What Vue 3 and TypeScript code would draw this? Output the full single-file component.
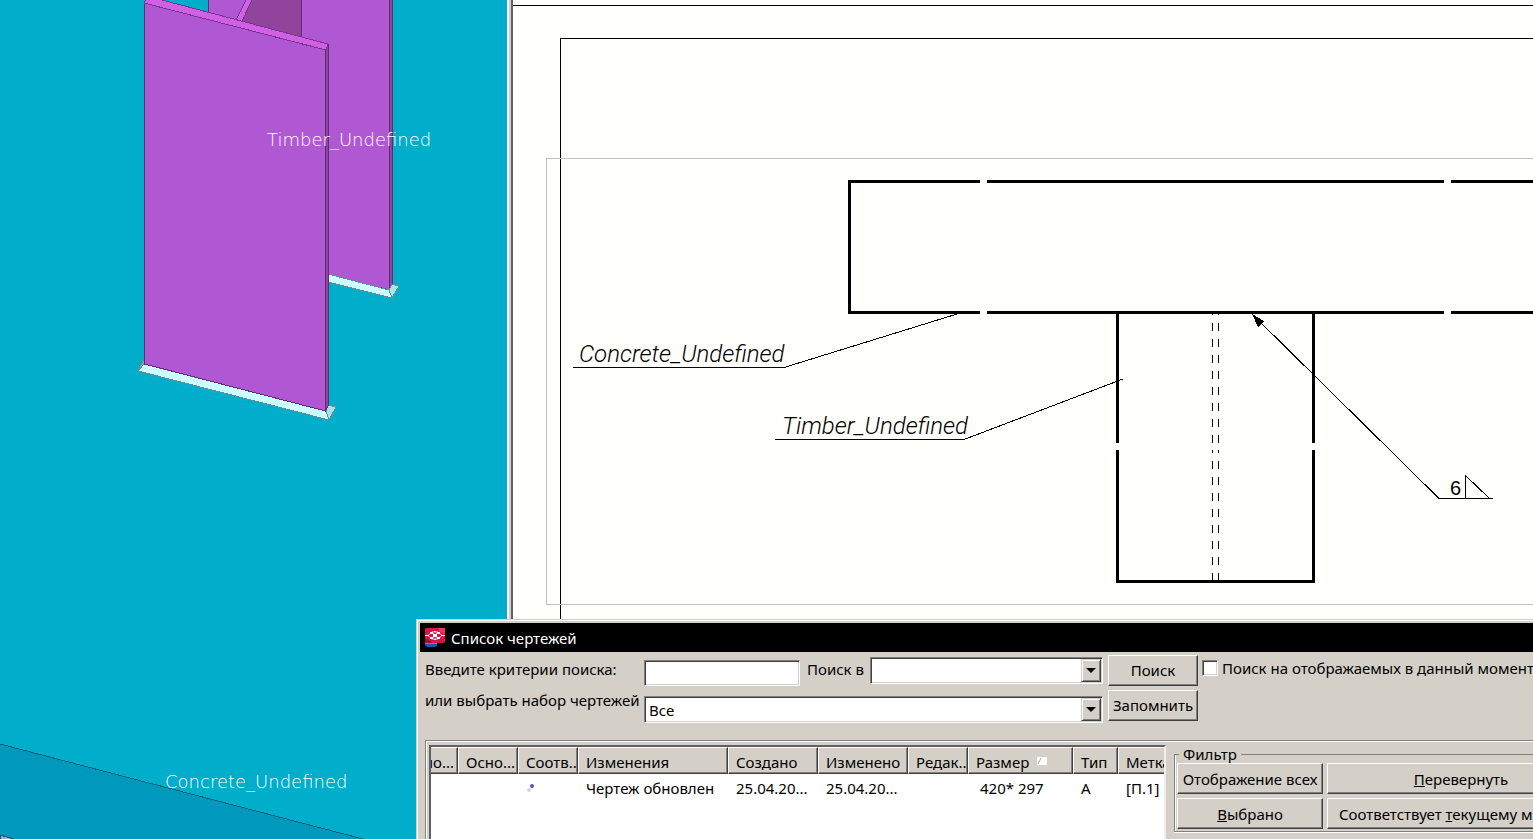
<script setup lang="ts">
import { ref } from 'vue'

interface Column {
  key: string
  title: string
  width: number
}

const columns: Column[] = [
  { key: 'number', title: 'мо...', width: 27 },
  { key: 'main', title: 'Осно...', width: 60 },
  { key: 'match', title: 'Соотв...', width: 60 },
  { key: 'changes', title: 'Изменения', width: 150 },
  { key: 'created', title: 'Создано', width: 90 },
  { key: 'modified', title: 'Изменено', width: 90 },
  { key: 'revision', title: 'Редак...', width: 60 },
  { key: 'size', title: 'Размер', width: 105 },
  { key: 'type', title: 'Тип', width: 45 },
  { key: 'mark', title: 'Метка', width: 90 },
]

const rows: Record<string, string>[] = [
  {
    changes: 'Чертеж обновлен',
    created: '25.04.20...',
    modified: '25.04.20...',
    size: '420* 297',
    type: 'A',
    mark: '[П.1]',
  },
]

const query = ref('')
const field = ref('')
const preset = ref('all')
const onlyShown = ref(false)
</script>

<template>
  <main class="workspace">
    <section class="model">
      <svg class="canvas" role="img" aria-label="3D">
        <g shape-rendering="crispEdges">
          <path d="M0 744L363 839H0Z" fill="#0099bd" />
          <path d="M0 744L363 839" stroke="#00617a" fill="none" />
          <path d="M0 835L14 839H0Z" fill="#a9a4cc" stroke="#00617a" />

          <path d="M208 -2H250V30H208Z" fill="#b058d4" stroke="#642a78" />
          <path d="M253 -2H302V40L240 24Z" fill="#90449c" />
          <path d="M301.500 -2H390V290L301 268Z" fill="#b058d4" stroke="#642a78" />
          <path d="M389.500 -2H392.500V284L389.500 290Z" fill="#8b4599" stroke="#642a78" />
          <path d="M247 -2L236 20L241 23L253 -2Z" fill="#d060e4" stroke="#77378c" />
          <path d="M328 274L389 290L392 298L328 282Z" fill="#ccffff" stroke="#628f94" />
          <path d="M392 284L399 286L392 298L389 290Z" fill="#a8e4e4" stroke="#628f94" />

          <path d="M144 359L138 370L144 371Z" fill="#7fa9b2" stroke="#628f94" />
          <path d="M144 364L326 411L329 420L138 371Z" fill="#ccffff" stroke="#628f94" />
          <path d="M328 405L336 407L329 420L326 411Z" fill="#a8e4e4" stroke="#628f94" />
          <path d="M144.500 3L325.500 50V411L144.500 364Z" fill="#b058d4" stroke="#642a78" />
          <path d="M325.500 50L328.500 44V405L325.500 411Z" fill="#8b4599" stroke="#642a78" />
          <path d="M144 3L147 -4L328 44L326 50Z" fill="#d060e4" stroke="#77378c" />
        </g>
        <text class="model-text" x="267" y="146">Timber_Undefined</text>
        <text class="model-text" x="165" y="788">Concrete_Undefined</text>
      </svg>
    </section>
    <div class="splitter"></div>
    <section class="drawing">
      <svg class="canvas" role="img" aria-label="2D">
        <g transform="translate(-513 0)" fill="none" stroke="#000" shape-rendering="crispEdges">
          <path d="M513 5.500H4000M560.500 900V38.500H4000" />
          <path d="M4000 158.500H546.500V604.500H4000" stroke="#c0c0c0" />
          <g stroke-width="3">
            <path d="M980 181.500H849.500V312.500H980M987 181.500H1444M987 312.500H1444M1451 181.500H4000M1451 312.500H4000" />
            <path d="M1117.500 313V443M1313.500 313V443M1117.500 450V581.500H1313.500V450" />
          </g>
          <path d="M1212.500 313V315M1218.500 313V315M1212.500 450V453M1218.500 450V453" />
          <path
            d="M1212.500 323V443M1218.500 323V443M1212.500 461V581M1218.500 461V581"
            stroke-dasharray="8 8"
          />
          <path d="M573 367.500H784L957 314M775 439.500H964L1123 379" />
          <path d="M1252 314L1439 498.500H1493M1465.500 498V475.500L1489 498" />
          <path d="M1252 314L1264 321L1258 327Z" fill="#000" stroke="none" />
        </g>
        <text class="note" x="66" y="362">Concrete_Undefined</text>
        <text class="note" x="269" y="434">Timber_Undefined</text>
        <text class="weld" x="937" y="495">6</text>
      </svg>
    </section>

    <section class="dialog" role="dialog" aria-labelledby="dialog-title">
      <header class="titlebar">
        <svg class="logo" viewBox="0 0 20 19" aria-hidden="true">
          <path d="M1 0H19L20 1V14L18 15H0V1Z" fill="#d31648" />
          <path d="M13 0H20V6L15 4Z" fill="#ec3360" />
          <path d="M0 10L7 14V15H0Z" fill="#9c1038" />
          <path d="M0 15H12V18L10 19H2L0 17Z" fill="#2354ad" />
          <path d="M0 15H12V16H0Z" fill="#5c8bd4" />
          <path d="M0 7.500H3L7 4H13L17 7.500H20M3 7.500L7 11H13L17 7.500M7 4L13 11M13 4L7 11" fill="none" stroke="#f7b7c8" />
          <path d="M8 6H12V9H8ZM5 4H8V6H5ZM12 4H15V6H12ZM5 9H8V11H5ZM12 9H15V11H12ZM9 3H11V4H9ZM9 11H11V12H9ZM0 7H4V8H0ZM16 7H20V8H16Z" fill="#fff" />
        </svg>
        <h1 id="dialog-title">Список чертежей</h1>
      </header>

      <form class="search" @submit.prevent>
        <label class="query-label" for="query">Введите критерии поиска:</label>
        <input id="query" v-model="query" class="textbox sunken" type="text" />
        <label class="in-label" for="field">Поиск в</label>
        <span class="combo sunken">
          <select id="field" v-model="field"><option value=""></option></select>
          <span class="arrow" aria-hidden="true"></span>
        </span>
        <button class="btn" type="submit">Поиск</button>
        <label class="check"><input v-model="onlyShown" type="checkbox" />Поиск на отображаемых в данный момент</label>

        <label class="preset-label" for="preset">или выбрать набор чертежей</label>
        <span class="combo preset sunken">
          <select id="preset" v-model="preset"><option value="all">Все</option></select>
          <span class="arrow" aria-hidden="true"></span>
        </span>
        <button class="btn" type="button">Запомнить</button>
      </form>

      <div class="panel">
        <div class="list">
          <table>
            <colgroup>
              <col v-for="c in columns" :key="c.key" :style="{ width: c.width + 'px' }" />
            </colgroup>
            <thead>
              <tr>
                <th v-for="c in columns" :key="c.key" :class="c.key" scope="col">
                  <span>{{ c.title }}</span>
                  <svg v-if="c.key === 'size'" class="sort" viewBox="0 0 10 8" aria-hidden="true">
                    <path d="M0 0H10V8H0Z" fill="#fff" />
                    <path d="M1 7L4 1" stroke="#a8a8a8" />
                  </svg>
                </th>
              </tr>
            </thead>
            <tbody>
              <tr v-for="(r, i) in rows" :key="i">
                <td v-for="c in columns" :key="c.key" :class="c.key">
                  <svg v-if="c.key === 'match'" class="dots" viewBox="0 0 8 8" aria-hidden="true">
                    <circle cx="2" cy="6" r="2" fill="#d2d2e8" />
                    <circle cx="5" cy="2" r="2" fill="#5a55b0" />
                  </svg>
                  <template v-else>{{ r[c.key] }}</template>
                </td>
              </tr>
            </tbody>
          </table>
        </div>

        <fieldset class="filter">
          <legend>Фильтр</legend>
          <button class="btn" type="button">Отображение всех</button>
          <button class="btn" type="button"><span><u>П</u>еревернуть</span></button>
          <button class="btn" type="button"><span><u>В</u>ыбрано</span></button>
          <button class="btn long" type="button"><span>Соответствует <u>т</u>екущему мо</span></button>
        </fieldset>
      </div>
    </section>
  </main>
</template>

<style>
body {
  margin: 0;
}
</style>

<style scoped>
.workspace {
  position: relative;
  display: flex;
  height: 100vh;
  overflow: hidden;
  font: 15px/20px "Noto Sans", "Open Sans", sans-serif;
  color: #000;
}
.workspace * {
  box-sizing: border-box;
}
.model {
  flex: 0 0 507px;
  background: #00adcb;
}
.splitter {
  flex: 0 0 6px;
  background: #d4d0c8;
  border-left: 2px solid #fff;
  border-right: 2px solid #606060;
}
.drawing {
  flex: 1;
  min-width: 0;
  background: #fffffb;
}
.canvas {
  display: block;
  width: 100%;
  height: 100%;
}
.model-text {
  font: 300 18px "DejaVu Sans Light", "DejaVu Sans", sans-serif;
  fill: #fff;
}
.note {
  font: italic 300 24px "Roboto", sans-serif;
}
.weld {
  font: 20px "Liberation Sans Narrow", "Liberation Sans", sans-serif;
}

.dialog {
  position: absolute;
  top: 619px;
  left: 416px;
  right: 0;
  bottom: 0;
  display: flex;
  flex-direction: column;
  padding: 3px 0 0 3px;
  overflow: hidden;
  background: #d4d0c8;
  border: solid #d4d0c8;
  border-width: 1px 0 0 1px;
  box-shadow: inset 1px 1px #fff;
}
.titlebar {
  display: flex;
  flex: none;
  align-items: center;
  gap: 6px;
  height: 29px;
  padding-left: 5px;
  background: #000;
  color: #fff;
}
.logo {
  width: 20px;
  height: 19px;
}
h1 {
  margin: 0;
  font: inherit;
}
.search {
  display: grid;
  flex: none;
  grid-template-columns: 219px 156px 70px 233px 91px 1fr;
  grid-template-rows: 31px 31px;
  row-gap: 4px;
  align-items: center;
  padding: 3px 0 0 5px;
  white-space: nowrap;
}
.query-label,
.in-label {
  align-self: start;
  padding-top: 4px;
}
.in-label {
  padding-left: 7px;
}
.preset-label {
  align-self: start;
}
.sunken {
  background: #fff;
  border: 1px solid;
  border-color: #808080 #fff #fff #808080;
  border-radius: 0;
  box-shadow: inset 1px 1px #404040, inset -1px -1px #d4d0c8;
}
.textbox {
  align-self: end;
  width: 100%;
  height: 26px;
  padding: 0 4px;
  font: inherit;
  outline: none;
}
.combo {
  display: flex;
  height: 27px;
  padding: 1px;
}
.combo select {
  flex: 1;
  min-width: 0;
  margin: 1px 0 0 1px;
  padding: 0 2px;
  appearance: none;
  background: transparent;
  border: 0;
  font: inherit;
  color: inherit;
  outline: none;
}
.preset {
  grid-column: 2 / span 3;
  margin-top: 8px;
}
.arrow {
  display: flex;
  flex: 0 0 20px;
  align-items: center;
  justify-content: center;
  background: #d4d0c8;
  border: 1px solid;
  border-color: #d4d0c8 #404040 #404040 #d4d0c8;
  box-shadow: inset 1px 1px #fff, inset -1px -1px #808080;
}
.arrow::before {
  content: "";
  border: solid transparent;
  border-width: 5px 5px 0;
  border-top-color: #000;
}
.btn {
  height: 31px;
  padding: 0;
  background: #d4d0c8;
  border: 1px solid;
  border-color: #fff #404040 #404040 #fff;
  box-shadow: inset -1px -1px #808080;
  font: inherit;
  color: inherit;
  white-space: nowrap;
}
.search .btn {
  margin-left: 5px;
  margin-right: -4px;
  padding-bottom: 2px;
}
.check {
  display: flex;
  align-items: center;
  align-self: start;
  gap: 4px;
  padding: 3px 0 0 8px;
}
.check input {
  flex: none;
  width: 16px;
  height: 16px;
  margin: 0;
  appearance: none;
  background: #fff;
  border: 1px solid;
  border-color: #808080 #fff #fff #808080;
  box-shadow: inset 1px 1px #404040, inset -1px -1px #d4d0c8;
}
.panel {
  display: flex;
  flex: 1;
  gap: 8px;
  margin: 19px 0 0 5px;
  padding: 4px 0 0 3px;
  border: solid #808080;
  border-width: 1px 0 0 1px;
  box-shadow: inset 1px 1px #fff;
}
.list {
  flex: 0 0 737px;
  overflow: hidden;
  background: #fff;
  border: solid;
  border-width: 2px 2px 0;
  border-color: #606060 #f0eeea #fff #606060;
}
table {
  width: 777px;
  table-layout: fixed;
  border-collapse: separate;
  border-spacing: 0;
}
th,
td {
  padding: 0 0 0 8px;
  overflow: hidden;
  font-weight: normal;
  text-align: left;
  white-space: nowrap;
}
th {
  height: 27px;
  padding: 2px 0 0 7px;
  background: #d4d0c8;
  border: 1px solid;
  border-color: #fff #404040 #404040 #fff;
  box-shadow: inset -1px -1px #808080;
}
th.number {
  padding: 2px 4px 0 0;
  border-left: 0;
  direction: rtl;
}
th.number span {
  direction: ltr;
  unicode-bidi: isolate;
}
td {
  height: 28px;
}
td.size {
  padding-left: 12px;
}
td.match {
  padding-left: 9px;
}
.dots {
  display: block;
  width: 8px;
  height: 8px;
}
.sort {
  width: 10px;
  height: 8px;
  margin: 0 0 3px 8px;
}
.filter {
  display: grid;
  flex: none;
  grid-template-columns: 146px 268px;
  gap: 4px;
  align-self: flex-start;
  margin: 0;
  padding: 0 2px 2px;
  border: 1px solid #808080;
  box-shadow: inset 1px 0 #fff, 0 1px #fff;
}
legend {
  height: 18px;
  margin-left: 2px;
  padding: 0 4px;
  line-height: 18px;
}
.long {
  padding-left: 11px;
  text-align: left;
}
</style>
